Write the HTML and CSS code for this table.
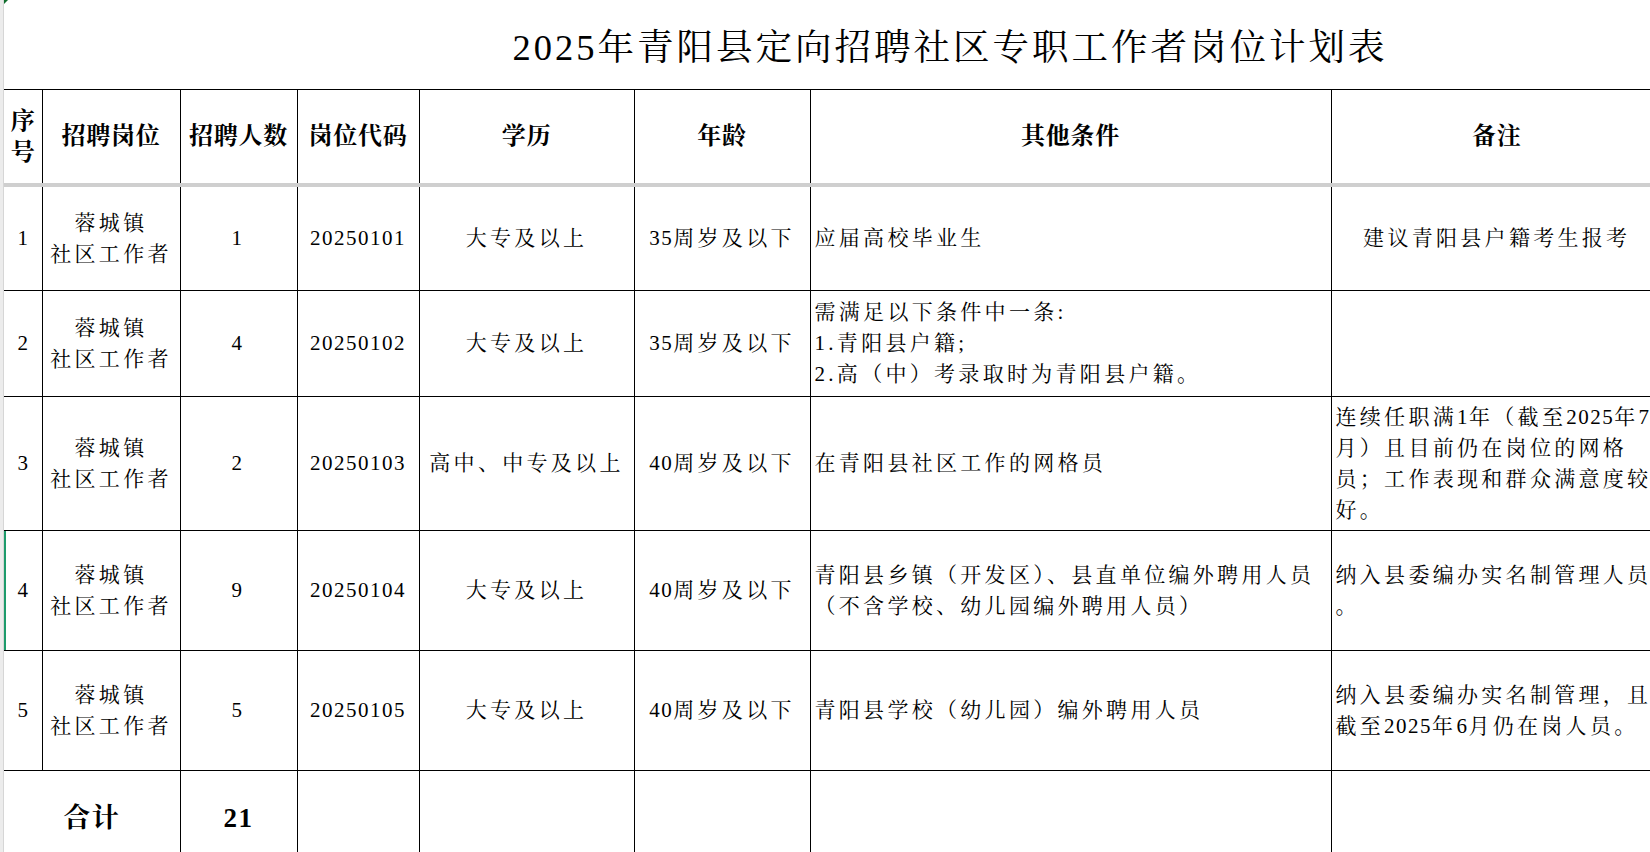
FILE: index.html
```html
<!DOCTYPE html>
<html lang="zh-CN">
<head>
<meta charset="utf-8">
<title>2025年青阳县定向招聘社区专职工作者岗位计划表</title>
<link rel="stylesheet" href="styles.css">
</head>
<body>
<div class="sheet">
  <div class="strip"></div>
  <div class="main">
    <span class="flag"></span>
    <div class="title">2025年青阳县定向招聘社区专职工作者岗位计划表</div>
    <table class="grid">
      <colgroup>
        <col class="c1"><col class="c2"><col class="c3"><col class="c4">
        <col class="c5"><col class="c6"><col class="c7"><col class="c8">
      </colgroup>
      <tr class="head">
        <th class="nohl">序号</th>
        <th>招聘岗位</th>
        <th>招聘人数</th>
        <th>岗位代码</th>
        <th>学历</th>
        <th>年龄</th>
        <th>其他条件</th>
        <th class="nor">备注</th>
      </tr>
      <tr class="freeze"><td colspan="8"></td></tr>
      <tr class="r1">
        <td class="nohl">1</td>
        <td>蓉城镇<br>社区工作者</td>
        <td>1</td>
        <td class="n">20250101</td>
        <td>大专及以上</td>
        <td><span class="n">35</span>周岁及以下</td>
        <td class="left">应届高校毕业生</td>
        <td class="nor nw">建议青阳县户籍考生报考</td>
      </tr>
      <tr class="r2">
        <td class="nohl">2</td>
        <td>蓉城镇<br>社区工作者</td>
        <td>4</td>
        <td class="n">20250102</td>
        <td>大专及以上</td>
        <td><span class="n">35</span>周岁及以下</td>
        <td class="left">需满足以下条件中一条:<br>1.青阳县户籍;<br>2.高（中）考录取时为青阳县户籍。</td>
        <td class="nor"></td>
      </tr>
      <tr class="r3">
        <td class="nohl">3</td>
        <td>蓉城镇<br>社区工作者</td>
        <td>2</td>
        <td class="n">20250103</td>
        <td>高中、中专及以上</td>
        <td><span class="n">40</span>周岁及以下</td>
        <td class="left">在青阳县社区工作的网格员</td>
        <td class="nor left nw">连续任职满<span class="n">1</span>年（截至<span class="n">2025</span>年<span class="n">7</span><br>月）且目前仍在岗位的网格<br>员；工作表现和群众满意度较<br>好。</td>
      </tr>
      <tr class="r4">
        <td class="nohl sel">4</td>
        <td>蓉城镇<br>社区工作者</td>
        <td>9</td>
        <td class="n">20250104</td>
        <td>大专及以上</td>
        <td><span class="n">40</span>周岁及以下</td>
        <td class="left nw">青阳县乡镇（开发区）、县直单位编外聘用人员<br>（不含学校、幼儿园编外聘用人员）</td>
        <td class="nor left nw">纳入县委编办实名制管理人员<br>。</td>
      </tr>
      <tr class="r5">
        <td class="nohl">5</td>
        <td>蓉城镇<br>社区工作者</td>
        <td>5</td>
        <td class="n">20250105</td>
        <td>大专及以上</td>
        <td><span class="n">40</span>周岁及以下</td>
        <td class="left">青阳县学校（幼儿园）编外聘用人员</td>
        <td class="nor left nw">纳入县委编办实名制管理，且<br>截至<span class="n">2025</span>年<span class="n">6</span>月仍在岗人员。</td>
      </tr>
      <tr class="total">
        <td class="nohl" colspan="2">合计</td>
        <td>21</td>
        <td></td>
        <td></td>
        <td></td>
        <td></td>
        <td class="nor"></td>
      </tr>
    </table>
  </div>
</div>
</body>
</html>
```
FILE: styles.css
```css
html, body {
  margin: 0;
  padding: 0;
  overflow: hidden;
  background: #ffffff;
}

body {
  width: 1650px;
  height: 852px;
  font-family: "Liberation Serif", "Noto Serif CJK SC", "Noto Sans CJK SC", serif;
  color: #000;
}

.sheet {
  display: flex;
  width: 1650px;
  height: 852px;
  overflow: hidden;
}

.strip {
  flex: 0 0 3px;
  background: #ececec;
  border-right: 1px solid #d6d6d6;
}

.main {
  position: relative;
  flex: 1 1 auto;
  overflow: hidden;
}

.flag {
  position: absolute;
  left: 0;
  top: 0;
  width: 0;
  height: 0;
  border-top: 4px solid #0f6d2c;
  border-right: 4px solid transparent;
}

.title {
  width: 1892px;
  height: 89px;
  box-sizing: border-box;
  padding-bottom: 1px;
  display: flex;
  align-items: center;
  justify-content: center;
  font-size: 36.5px;
  letter-spacing: 3px;
  white-space: nowrap;
}

.grid {
  border-collapse: collapse;
  table-layout: fixed;
  width: 1658px;
}

.c1 { width: 38px; }
.c2 { width: 138px; }
.c3 { width: 117px; }
.c4 { width: 122px; }
.c5 { width: 215px; }
.c6 { width: 176px; }
.c7 { width: 521px; }
.c8 { width: 331px; }

.grid th,
.grid td {
  border: 1px solid #000;
  padding: 0 4px;
  text-align: center;
  vertical-align: middle;
  font-size: 21px;
  line-height: 31px;
  letter-spacing: 3.3px;
  font-weight: normal;
  overflow: hidden;
}

.grid .n,
.n {
  letter-spacing: 1.5px;
}

.grid th {
  font-size: 24px;
  font-weight: bold;
  letter-spacing: 0.8px;
  line-height: 31px;
}

.grid .nohl { border-left: none; padding: 0; letter-spacing: 0; }
.grid .nor { border-right: none; }

.grid .left { text-align: left; }
.grid .nw { white-space: nowrap; }

.head th { height: 93px; border-bottom: none; }

.freeze td {
  height: 4px;
  padding: 0;
  border: none;
  background: #cfcfcf;
  line-height: 0;
  font-size: 0;
}

.r1 td { height: 103px; border-top: none; }
.r2 td { height: 105px; }
.r3 td { height: 133px; }
.r4 td { height: 119px; }
.r5 td { height: 119px; }
.grid .total td {
  height: 94px;
  font-size: 27px;
  font-weight: bold;
  letter-spacing: 1.5px;
  border-bottom: none;
}

.grid .sel {
  box-shadow: inset 2px 0 0 #1e9b6b;
}
```
